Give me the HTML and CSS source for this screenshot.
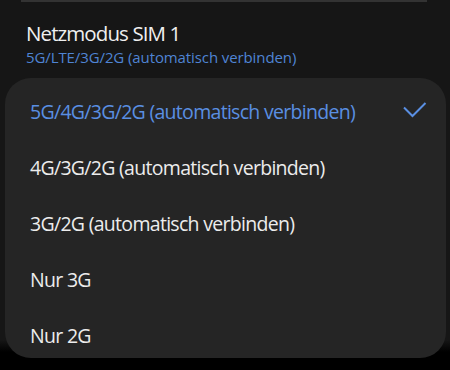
FILE: index.html
```html
<!DOCTYPE html>
<html lang="de">

<head>
    <meta charset="UTF-8">
    <meta name="viewport" content="width=device-width, initial-scale=1.0">
    <title>Netzmodus</title>
    <link rel="stylesheet" href="styles.css">
</head>

<body>
    <div class="screen">
        <div class="card-edge"></div>

        <div class="setting">
            <div class="setting-title">Netzmodus SIM 1</div>
            <div class="setting-value">5G/LTE/3G/2G (automatisch verbinden)</div>
        </div>

        <!-- Auswahl-Popup -->
        <div class="sheet">
            <div class="option selected">
                <span>5G/4G/3G/2G (automatisch verbinden)</span>
                <svg class="check" width="24" height="18" viewBox="0 0 24 18">
                    <path d="M1 5.5 L9.5 14 L22.5 1" fill="none" stroke="#5a8fe2" stroke-width="2" />
                </svg>
            </div>
            <div class="option">4G/3G/2G (automatisch verbinden)</div>
            <div class="option">3G/2G (automatisch verbinden)</div>
            <div class="option">Nur 3G</div>
            <div class="option">Nur 2G</div>
        </div>
    </div>
</body>

</html>
```

FILE: styles.css
```css
/* Page */

body {
    margin: 0;
    background: #000;
    font-family: 'Open Sans', 'Noto Sans', sans-serif;
}

.screen {
    width: 450px;
    height: 370px;
    background: linear-gradient(#161616 0, #161616 340px, #000 352px);
    overflow: hidden;
}

/* Bottom of the card above */

.card-edge {
    height: 2px;
    margin: 0 23px 0 21px;
    background-color: #333;
}

/* Setting row */

.setting {
    padding: 17px 26px 0;
}

.setting-title {
    font-size: 20.5px;
    letter-spacing: -0.9px;
    line-height: 28px;
    color: #efefef;
}

.setting-value {
    font-size: 15px;
    letter-spacing: -0.1px;
    line-height: 20px;
    color: #4f84d4;
}

/* Popup list */

.sheet {
    margin: 11px 4px 0 5px;
    height: 280px;
    padding-top: 5px;
    box-sizing: border-box;
    background-color: #252525;
    border-radius: 26px;
    overflow: hidden;
}

.option {
    display: flex;
    justify-content: space-between;
    align-items: center;
    height: 56px;
    padding: 0 19px 0 25px;
    font-size: 19.5px;
    letter-spacing: -0.7px;
    color: #ececec;
}

.option.selected {
    color: #5a8fe2;
}

.check {
    display: block;
}
```
